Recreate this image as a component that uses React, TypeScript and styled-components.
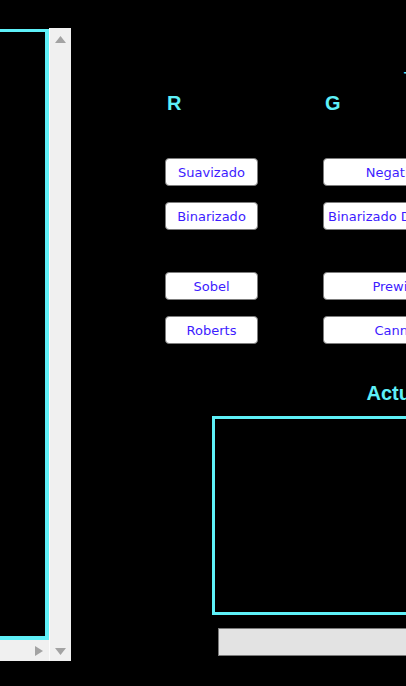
import React from "react";
import styled, { createGlobalStyle } from "styled-components";

const CYAN = "#5ef0f8";

const Global = createGlobalStyle`
  html, body { margin: 0; padding: 0; background: #000; }
  body {
    width: 406px;
    height: 686px;
    overflow: hidden;
    font-family: "Liberation Sans", Arial, sans-serif;
  }
`;

const Screen = styled.div`
  display: flex;
  align-items: flex-start;
  width: 406px;
  height: 686px;
  background: #000;
  overflow: hidden;
`;

const ScrollPane = styled.div`
  flex: 0 0 300px;
  margin-left: -229px;
  margin-top: 28px;
  height: 633px;
  display: grid;
  grid-template-columns: 1fr 22px;
  grid-template-rows: 1fr 21px;
`;

const Viewport = styled.div`
  grid-area: 1 / 1 / 2 / 2;
  background: #000;
  padding-top: 1px;
  display: flex;
`;

const ImageFrame = styled.div`
  flex: 1;
  border: 3px solid ${CYAN};
  border-right-width: 4px;
  border-bottom-width: 4px;
`;

const VScroll = styled.div`
  grid-area: 1 / 2 / 3 / 3;
  background: #f0f0f0;
  border-left: 1px solid #fbfbfb;
  display: flex;
  flex-direction: column;
  justify-content: space-between;
  align-items: center;
  padding: 8px 0 6px;
`;

const HScroll = styled.div`
  grid-area: 2 / 1 / 3 / 2;
  background: #f0f0f0;
  display: flex;
  justify-content: flex-end;
  align-items: center;
  padding-right: 6px;
`;

const Main = styled.div`
  flex: 0 0 620px;
  display: flex;
  flex-direction: column;
  align-items: flex-start;
  padding: 69px 0 0 94px;
`;

const Title = styled.div`
  margin-left: 239px;
  color: ${CYAN};
  font-weight: bold;
  font-size: 13px;
  line-height: 15px;
  height: 15px;
  white-space: nowrap;
`;

const LabelRow = styled.div`
  margin-top: 9px;
  margin-left: 2px;
  display: grid;
  grid-template-columns: repeat(3, 158px);
`;

const ChannelLabel = styled.div`
  color: ${CYAN};
  font-weight: bold;
  font-size: 20px;
  line-height: 20px;
`;

const ButtonGrid = styled.div<{ $top: number }>`
  margin-top: ${(p) => p.$top}px;
  display: grid;
  grid-template-columns: repeat(3, 158px);
  row-gap: 16px;
`;

const Btn = styled.button<{ $wide?: boolean }>`
  width: ${(p) => (p.$wide ? 144 : 93)}px;
  height: 28px;
  box-sizing: border-box;
  padding: 0;
  margin: 0;
  background: #fff;
  border: 1px solid #7d7d7d;
  border-radius: 4px;
  color: #3d1cff;
  font-family: "DejaVu Sans", Verdana, sans-serif;
  font-size: 13px;
  white-space: nowrap;
  overflow: hidden;
  display: flex;
  align-items: center;
  justify-content: center;
`;

const Preview = styled.div`
  margin-top: 39px;
  margin-left: 47px;
  width: 370px;
  display: flex;
  flex-direction: column;
  align-items: center;
`;

const PreviewTitle = styled.div`
  color: ${CYAN};
  font-weight: bold;
  font-size: 20px;
  line-height: 20px;
`;

const PreviewFrame = styled.div`
  margin-top: 13px;
  width: 100%;
  height: 199px;
  box-sizing: border-box;
  border: 3px solid ${CYAN};
`;

const StatusBar = styled.div`
  margin-top: 13px;
  width: 358px;
  height: 28px;
  box-sizing: border-box;
  background: #e3e3e3;
  border: 1px solid #7a7a7a;
`;

const Arrow = ({ dir }: { dir: "up" | "down" | "right" }) => {
  if (dir === "right") {
    return (
      <svg width="8" height="10" viewBox="0 0 8 10">
        <polygon points="0,0 8,5 0,10" fill="#a3a3a3" />
      </svg>
    );
  }
  return (
    <svg width="11" height="7" viewBox="0 0 11 7">
      <polygon
        points={dir === "up" ? "0,7 5.5,0 11,7" : "0,0 11,0 5.5,7"}
        fill="#a3a3a3"
      />
    </svg>
  );
};

const col1 = [["Suavizado", "Binarizado"], ["Sobel", "Roberts"]];
const col2 = [["Negativo", "Binarizado Dinámico"], ["Prewitt", "Canny"]];

export default function App() {
  return (
    <>
      <Global />
      <Screen>
        <ScrollPane>
          <Viewport>
            <ImageFrame />
          </Viewport>
          <VScroll>
            <Arrow dir="up" />
            <Arrow dir="down" />
          </VScroll>
          <HScroll>
            <Arrow dir="right" />
          </HScroll>
        </ScrollPane>
        <Main>
          <Title>Transformaciones</Title>
          <LabelRow>
            <ChannelLabel>R</ChannelLabel>
            <ChannelLabel>G</ChannelLabel>
            <ChannelLabel>B</ChannelLabel>
          </LabelRow>
          {[0, 1].map((g) => (
            <ButtonGrid key={g} $top={g === 0 ? 45 : 42}>
              <Btn>{col1[g][0]}</Btn>
              <Btn $wide>{col2[g][0]}</Btn>
              <span />
              <Btn>{col1[g][1]}</Btn>
              <Btn $wide>{col2[g][1]}</Btn>
              <span />
            </ButtonGrid>
          ))}
          <Preview>
            <PreviewTitle>Actual</PreviewTitle>
            <PreviewFrame />
            <StatusBar />
          </Preview>
        </Main>
      </Screen>
    </>
  );
}
